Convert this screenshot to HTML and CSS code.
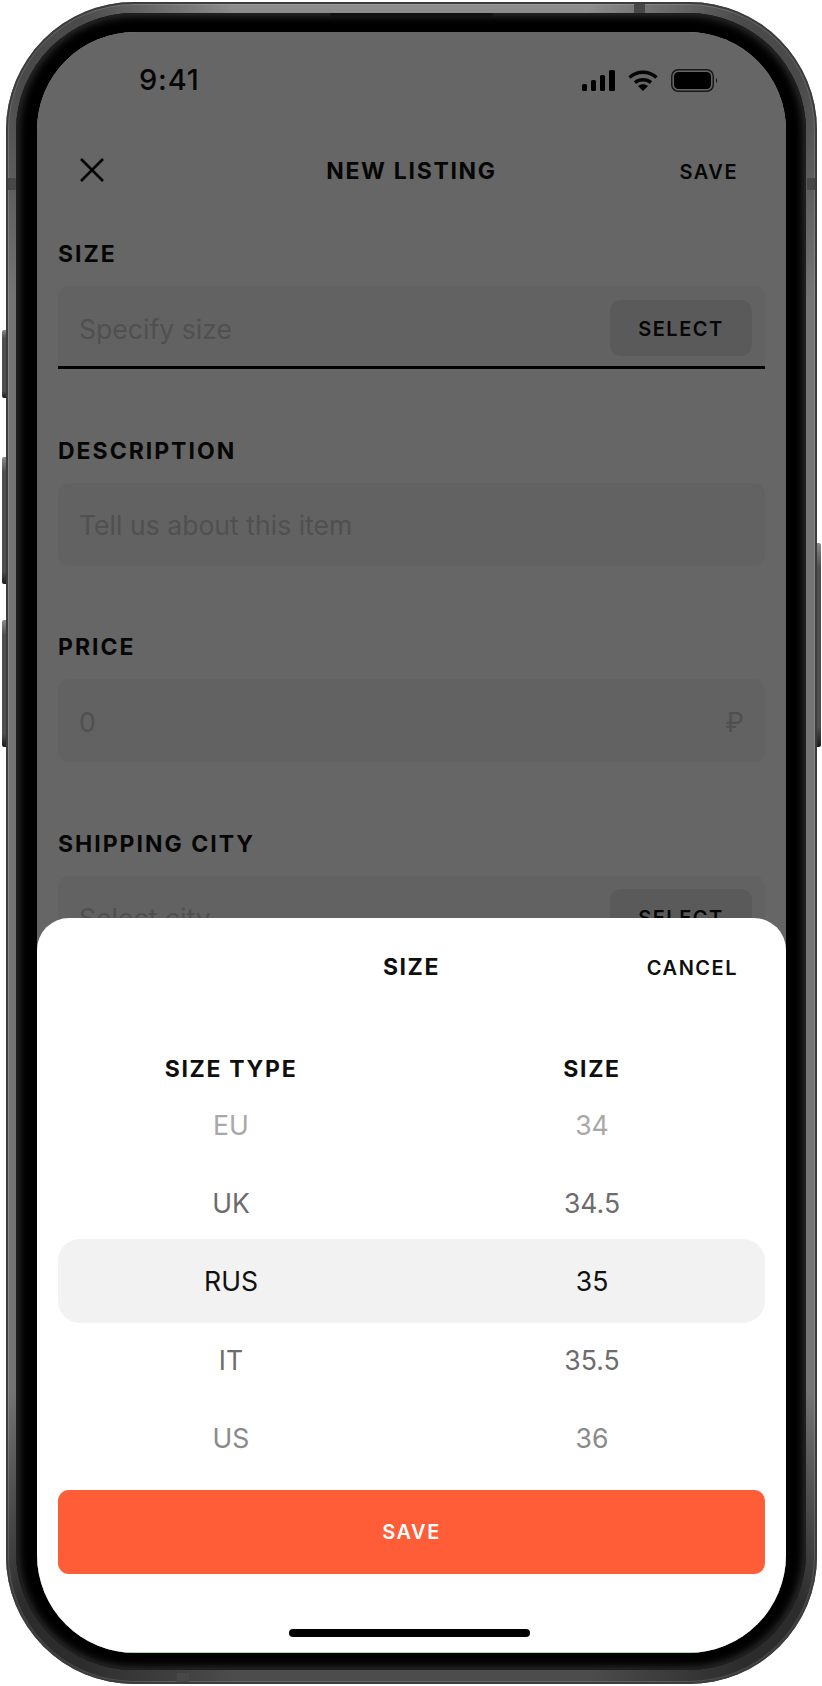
FILE: index.html
```html
<!DOCTYPE html>
<html lang="en">
<head>
    <meta charset="UTF-8">
    <meta name="viewport" content="width=device-width, initial-scale=1.0">
    <title>New listing</title>
    <link rel="stylesheet" href="styles.css">
</head>
<body>
    <div class="device">
        <span class="side-btn side-left mute"></span>
        <span class="side-btn side-left vol-up"></span>
        <span class="side-btn side-left vol-down"></span>
        <span class="side-btn side-right power"></span>
        <span class="band band-left"></span>
        <span class="band band-right"></span>
        <span class="band band-top"></span>
        <span class="band band-bottom"></span>

        <div class="bezel">
            <span class="speaker"></span>

            <div class="screen">
                <div class="status-bar">
                    <span class="time">9:41</span>
                    <div class="status-icons">
                        <svg class="icon-signal" width="33" height="21" viewBox="0 0 33 21">
                            <rect x="0" y="14" width="5" height="7" rx="1.5"/>
                            <rect x="9" y="10" width="5" height="11" rx="1.5"/>
                            <rect x="18" y="5" width="5" height="16" rx="1.5"/>
                            <rect x="27" y="0" width="6" height="21" rx="1.5"/>
                        </svg>
                        <svg class="icon-wifi" width="30" height="21" viewBox="0 0 30 21">
                            <path d="M1.5 7.5 C9 0.5 21 0.5 28.5 7.5" fill="none" stroke="#0a0a0a" stroke-width="3.4"/>
                            <path d="M7 12.6 C11.5 8.8 18.5 8.8 23 12.6" fill="none" stroke="#0a0a0a" stroke-width="3.4"/>
                            <path d="M10 16 C13 13.8 17 13.8 20 16 L15 21 Z"/>
                        </svg>
                        <svg class="icon-battery" width="47" height="23" viewBox="0 0 47 23">
                            <rect x="0.75" y="0.75" width="41.5" height="21.5" rx="6.5" fill="none" stroke="#3d3d3d" stroke-width="1.5"/>
                            <rect x="3" y="3" width="37" height="17" rx="4.5"/>
                            <path d="M45 9 C46.4 9.6 46.4 13.4 45 14 Z" fill="#3d3d3d"/>
                        </svg>
                    </div>
                </div>

                <div class="nav-bar">
                    <svg class="icon-close" width="24" height="24" viewBox="0 0 24 24">
                        <path d="M1 1 L23 23 M23 1 L1 23" fill="none" stroke="#0a0a0a" stroke-width="2.6"/>
                    </svg>
                    <h1 class="nav-title">NEW LISTING</h1>
                    <span class="nav-action">SAVE</span>
                </div>

                <div class="form">
                    <div class="form-group">
                        <div class="form-label">SIZE</div>
                        <div class="field field-active">
                            <span class="placeholder">Specify size</span>
                            <span class="select-btn">SELECT</span>
                        </div>
                    </div>
                    <div class="form-group">
                        <div class="form-label">DESCRIPTION</div>
                        <div class="field">
                            <span class="placeholder">Tell us about this item</span>
                        </div>
                    </div>
                    <div class="form-group">
                        <div class="form-label">PRICE</div>
                        <div class="field">
                            <span class="placeholder">0</span>
                            <span class="placeholder">₽</span>
                        </div>
                    </div>
                    <div class="form-group">
                        <div class="form-label">SHIPPING CITY</div>
                        <div class="field">
                            <span class="placeholder">Select city</span>
                            <span class="select-btn">SELECT</span>
                        </div>
                    </div>
                </div>

                <div class="dim"></div>

                <div class="sheet">
                    <div class="sheet-header">
                        <span class="sheet-title">SIZE</span>
                        <span class="sheet-cancel">CANCEL</span>
                    </div>

                    <div class="picker">
                        <div class="picker-row picker-head">
                            <span>SIZE TYPE</span>
                            <span>SIZE</span>
                        </div>
                        <div class="picker-row fade-far">
                            <span>EU</span>
                            <span>34</span>
                        </div>
                        <div class="picker-row fade-near">
                            <span>UK</span>
                            <span>34.5</span>
                        </div>
                        <div class="picker-row picker-selected">
                            <span>RUS</span>
                            <span>35</span>
                        </div>
                        <div class="picker-row fade-near">
                            <span>IT</span>
                            <span>35.5</span>
                        </div>
                        <div class="picker-row fade-mid">
                            <span>US</span>
                            <span>36</span>
                        </div>
                    </div>

                    <button class="save-btn">SAVE</button>
                    <div class="home-indicator"></div>
                </div>
            </div>
        </div>
    </div>
</body>
</html>
```

FILE: styles.css
```css
* {
    box-sizing: border-box;
}

body {
    margin: 0;
    background: #fff;
    font-family: Inter, "Liberation Sans", sans-serif;
    color: #0f0f0f;
}

/* metal edge: lighter on the straight sides, dark through the corners */
.device {
    position: relative;
    width: 811px;
    height: 1682px;
    margin: 2px 0 0 6px;
    padding: 11px 11px 14px 10px;
    border-radius: 128px;
    background: conic-gradient(
        #8c8c8c 0deg 12deg,
        #4a4a4a 22deg 27deg,
        #747474 36deg 144deg,
        #2c2c2c 153deg 158deg,
        #4c4c4c 168deg 192deg,
        #2c2c2c 202deg 207deg,
        #747474 216deg 324deg,
        #4a4a4a 333deg 338deg,
        #8c8c8c 348deg 360deg
    );
    box-shadow:
        inset 0 0 0 2px #3c3c3c,
        inset 0 0 0 3px rgba(255, 255, 255, 0.14);
}

.bezel {
    position: relative;
    height: 100%;
    padding: 19px 20px 17px 21px;
    border-radius: 118px;
    background: #000;
    box-shadow:
        inset 0 0 0 2px #1e1e1e,
        inset 0 0 10px 2px #3a3a3a;
}

.side-btn {
    position: absolute;
    width: 4px;
    background: linear-gradient(#8a8a8a, #4e4e4e 12%, #4e4e4e 90%, #1c1c1c);
}

.side-left {
    left: -4px;
    border-radius: 2px 0 0 2px;
}

.side-right {
    right: -4px;
    border-radius: 0 2px 2px 0;
}

.mute {
    top: 328px;
    height: 68px;
}

.vol-up {
    top: 455px;
    height: 127px;
}

.vol-down {
    top: 618px;
    height: 127px;
}

.power {
    top: 541px;
    height: 204px;
}

.band {
    position: absolute;
    background: #484848;
}

.band-left {
    left: 2px;
    top: 176px;
    width: 8px;
    height: 12px;
}

.band-right {
    right: 2px;
    top: 176px;
    width: 8px;
    height: 12px;
}

.band-top {
    left: 628px;
    top: 2px;
    width: 11px;
    height: 9px;
}

.band-bottom {
    left: 171px;
    bottom: 2px;
    width: 12px;
    height: 9px;
}

.speaker {
    position: absolute;
    left: 314px;
    top: 0;
    width: 163px;
    height: 4px;
    border-radius: 0 0 5px 5px;
    background: #111;
}

.screen {
    position: relative;
    height: 1621px;
    border-radius: 98px;
    background: #fff;
    overflow: hidden;
}

.status-bar {
    height: 96px;
    display: flex;
    align-items: center;
    justify-content: space-between;
    padding: 0 68px 0 102px;
}

.time {
    font-size: 29px;
    font-weight: 500;
    letter-spacing: 0.8px;
    margin-top: -2px;
}

.status-icons {
    display: flex;
    align-items: center;
    gap: 13px;
}

.nav-bar {
    height: 84px;
    display: flex;
    align-items: center;
    justify-content: space-between;
    padding: 0 48px 0 43px;
    position: relative;
}

.nav-title {
    position: absolute;
    left: 0;
    right: 0;
    margin: 0;
    padding-top: 1px;
    text-align: center;
    font-size: 23px;
    font-weight: 700;
    letter-spacing: 1.7px;
}

.nav-action {
    font-size: 20px;
    font-weight: 600;
    letter-spacing: 1.5px;
    padding-top: 3px;
}

.form {
    padding: 26px 21px 0 21px;
}

.form-group {
    height: 196.5px;
}

.form-label {
    height: 32px;
    margin-bottom: 16px;
    line-height: 32px;
    font-size: 23px;
    font-weight: 700;
    letter-spacing: 2px;
}

.field {
    height: 83px;
    display: flex;
    align-items: center;
    justify-content: space-between;
    padding: 0 21px;
    border-radius: 11px;
    background: #f5f5f5;
}

.field-active {
    border-radius: 11px 11px 0 0;
    box-shadow: inset 0 -3px 0 #000;
}

.placeholder {
    padding-top: 2px;
    font-size: 26.6px;
    color: #c8c8c8;
}

.select-btn {
    width: 142px;
    height: 56px;
    margin-right: -8px;
    padding-top: 2px;
    display: flex;
    align-items: center;
    justify-content: center;
    border-radius: 11px;
    background: #e2e2e2;
    font-size: 20px;
    font-weight: 600;
    letter-spacing: 1.5px;
}

.dim {
    position: absolute;
    inset: 0;
    background: rgba(0, 0, 0, 0.6);
}

.sheet {
    position: absolute;
    left: 0;
    right: 0;
    bottom: 0;
    height: 735px;
    padding: 0 21px;
    border-radius: 32px 32px 0 0;
    background: #fff;
    border-bottom: 1px solid #a5dcae;
}

.sheet-header {
    position: relative;
    height: 133px;
    padding-top: 27px;
    text-align: center;
    line-height: 44px;
}

.sheet-title {
    font-size: 23px;
    font-weight: 700;
    letter-spacing: 1.6px;
}

.sheet-cancel {
    position: absolute;
    right: 27px;
    top: 28px;
    font-size: 20px;
    font-weight: 600;
    letter-spacing: 1.5px;
}

.picker-row {
    height: 78.3px;
    padding-top: 2px;
    display: grid;
    grid-template-columns: 1fr 1fr;
    column-gap: 15px;
    align-items: center;
    justify-items: center;
    font-size: 26.6px;
}

.picker-head {
    height: 34px;
    font-size: 23px;
    font-weight: 700;
    letter-spacing: 1.7px;
}

.fade-far {
    color: #a8a8a8;
}

.fade-mid {
    color: #8a8a8a;
}

.fade-near {
    color: #6c6c6c;
}

.picker-selected {
    height: 84px;
    margin: -2.35px 0 -3.35px 0;
    padding-top: 0;
    border-radius: 22px;
    background: #f2f2f2;
    color: #111;
}

.save-btn {
    display: block;
    width: 100%;
    height: 84px;
    margin-top: 13px;
    padding-top: 2px;
    border: none;
    border-radius: 11px;
    background: #ff5c38;
    color: #fff;
    font-family: inherit;
    font-size: 20px;
    font-weight: 600;
    letter-spacing: 1.5px;
}

.home-indicator {
    width: 241px;
    height: 8px;
    margin: 55px 0 0 231px;
    border-radius: 4px;
    background: #000;
}
```
